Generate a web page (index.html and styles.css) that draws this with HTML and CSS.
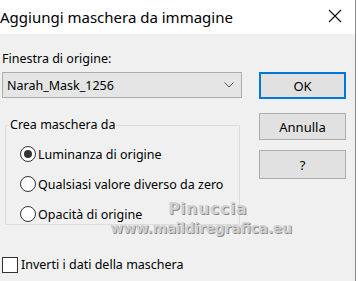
FILE: index.html
```html
<!DOCTYPE html>
<html lang="it">
<head>
  <meta charset="UTF-8">
  <link rel="stylesheet" href="styles.css">
  <title>Aggiungi maschera da immagine</title>
</head>
<body>
  <div class="window">
    <div class="titlebar">
      <span class="title">Aggiungi maschera da immagine</span>
      <svg class="close" width="14" height="14" viewBox="0 0 14 14">
        <path d="M1 1 L13 13 M13 1 L1 13" stroke="#111" stroke-width="1.1" fill="none"/>
      </svg>
    </div>

    <div class="content">
      <div class="main">
        <div class="left">
          <div class="label">Finestra di origine:</div>
          <div class="combo">
            <span>Narah_Mask_1256</span>
            <svg width="10" height="6" viewBox="0 0 10 6">
              <path d="M0.5 0.5 L5 5 L9.5 0.5" stroke="#555" stroke-width="1" fill="none"/>
            </svg>
          </div>

          <fieldset class="group">
            <legend>Crea maschera da</legend>
            <div class="option"><span class="radio checked"></span>Luminanza di origine</div>
            <div class="option"><span class="radio"></span>Qualsiasi valore diverso da zero</div>
            <div class="option"><span class="radio"></span>Opacità di origine</div>
          </fieldset>
        </div>

        <div class="buttons">
          <div class="btn default">OK</div>
          <div class="btn">Annulla</div>
          <div class="btn help">?</div>
        </div>
      </div>

      <div class="check-row"><span class="checkbox"></span>Inverti i dati della maschera</div>
    </div>

    <div class="watermark">
      <div class="wm-name">Pinuccia</div>
      <div class="wm-site">www.maildiregrafica.eu</div>
    </div>
  </div>
</body>
</html>
```

FILE: styles.css
```css
body {
  margin: 0;
  background-color: #fff;
  font-family: 'Noto Sans', 'Open Sans', sans-serif;
}

.window {
  position: relative;
  width: 355px;
  height: 281px;
  background-color: #f0f0f0;
  border-right: 1px solid #8a8a8a;
  overflow: hidden;
}

.titlebar {
  height: 34px;
  background-color: #fff;
  display: flex;
  align-items: center;
  justify-content: space-between;
  padding-right: 13px;
}

.title {
  font-size: 15px;
  color: #000;
  margin-top: -1px;
}

.close {
  margin-top: -2px;
}

.content {
  padding: 16px 0 0 2px;
  font-size: 12.5px;
  color: #000;
}

.main {
  display: flex;
}

.left {
  width: 240px;
}

.label {
  height: 22px;
  line-height: 17px;
}

.combo {
  height: 24px;
  border: 1px solid #adadad;
  background-color: #e5e5e5;
  display: flex;
  align-items: center;
  justify-content: space-between;
  padding: 0 7px 0 4px;
}

.group {
  margin: 19px 0 0 3px;
  width: 235px;
  height: 108px;
  box-sizing: border-box;
  border: 1px solid #dcdcdc;
  padding: 6px 0 0 14px;
}

.group legend {
  padding: 0 1px;
  margin-left: -11px;
  line-height: 16px;
}

.option {
  display: flex;
  align-items: center;
  height: 30px;
}

.radio {
  width: 14px;
  height: 14px;
  border: 1px solid #333;
  border-radius: 50%;
  background-color: #fff;
  margin-right: 2px;
  display: flex;
  align-items: center;
  justify-content: center;
}

.radio.checked::after {
  content: "";
  width: 8px;
  height: 8px;
  border-radius: 50%;
  background-color: #333;
}

.buttons {
  margin: 22px 0 0 17px;
  display: flex;
  flex-direction: column;
}

.btn {
  width: 85px;
  height: 25px;
  border: 1px solid #adadad;
  background-color: #e1e1e1;
  display: flex;
  align-items: center;
  justify-content: center;
  margin-bottom: 14px;
  font-size: 13px;
}

.btn.default {
  width: 83px;
  height: 23px;
  border: 2px solid #0078d7;
}

.btn.help {
  margin-top: -4px;
  height: 27px;
}

.check-row {
  display: flex;
  align-items: center;
  margin-top: 31px;
}

.checkbox {
  width: 14px;
  height: 14px;
  border: 1px solid #333;
  background-color: #fff;
  margin-right: 3px;
}

.watermark {
  position: absolute;
  left: 106px;
  top: 201px;
  width: 190px;
  text-align: center;
  font-family: 'DejaVu Sans', sans-serif;
  font-weight: bold;
  color: #d0d0d0;
  text-shadow: 1px 1px 0 #8c8c8c;
}

.wm-name {
  font-size: 16px;
  line-height: 16px;
  letter-spacing: 0.5px;
  padding-left: 13px;
}

.wm-site {
  margin-top: 4px;
  font-size: 14px;
  line-height: 14px;
  letter-spacing: -0.3px;
}
```
